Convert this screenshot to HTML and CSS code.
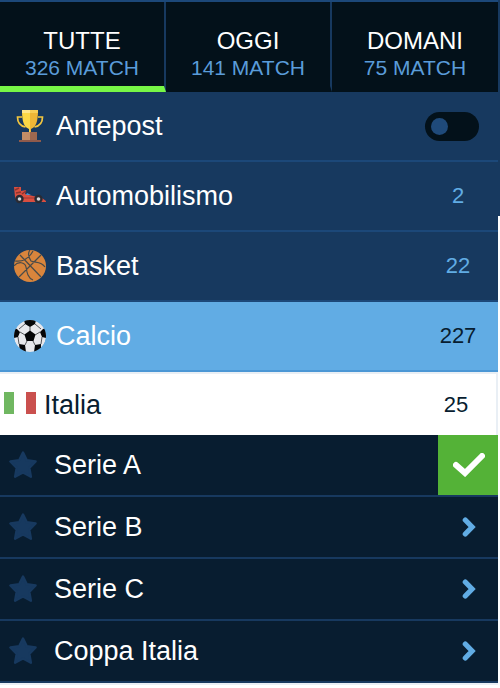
FILE: index.html
```html
<!DOCTYPE html>
<html lang="it">
<head>
<meta charset="utf-8">
<meta name="viewport" content="width=device-width, initial-scale=1">
<title>Palinsesto</title>
<link rel="stylesheet" href="styles.css">
</head>
<body>
<svg class="sprite" aria-hidden="true">
  <symbol id="star" viewBox="0 0 30 28"><path d="M15 1.500l3.800 7.800 8.800 1.200-6.300 6.300 1.600 8.900-7.900-4.200-7.900 4.200 1.600-8.900-6.300-6.300 8.800-1.200z" fill="#17395f" stroke="#17395f" stroke-width="2.400" stroke-linejoin="round"/></symbol>
  <symbol id="chevron" viewBox="0 0 14 20"><path d="M3.300 3l6.800 7-6.800 7" fill="none" stroke="#61ace4" stroke-width="5.200" stroke-linecap="round" stroke-linejoin="miter"/></symbol>
</svg>
<main class="schedule">
  <nav class="tabs">
    <button class="tab tab-active" type="button"><span class="tab-name">TUTTE</span><span class="tab-total">326 MATCH</span></button>
    <button class="tab" type="button"><span class="tab-name">OGGI</span><span class="tab-total">141 MATCH</span></button>
    <button class="tab" type="button"><span class="tab-name">DOMANI</span><span class="tab-total">75 MATCH</span></button>
  </nav>
  <div class="sport">
    <svg class="sport-icon" viewBox="0 0 32 32" aria-hidden="true">
      <path d="M8 7H3.500c0 6 2.500 9 8 10M24 7h4.500c0 6-2.500 9-8 10" fill="none" stroke="#f3c63f" stroke-width="1.700"/>
      <path d="M8 0h8v22h-1v-3C10 17 8 12 8 0z" fill="#fbd846"/><path d="M24 0h-8v22h1v-3c5-2 7-7 7-19z" fill="#efb636"/>
      <path d="M8 0h8v3H8z" fill="#fde68b"/><path d="M16 0h8v3h-8z" fill="#f7cd55"/>
      <path d="M8 22h8v8H8z" fill="#c38d66"/><path d="M16 22h7v8h-7z" fill="#9d6850"/><path d="M5 30h22v2H5z" fill="#8f5a4b"/>
    </svg>
    <label class="sport-name" for="antepost">Antepost</label>
    <input class="switch" id="antepost" type="checkbox" role="switch">
  </div>
  <a class="sport" href="#automobilismo">
    <svg class="sport-icon" viewBox="0 0 32 32" aria-hidden="true">
      <path d="M0 7h7v4l5-1-1 4 8 2 9 2 4 3v1H3L1 17z" fill="#d94e40"/>
      <path d="M1 10l4-2M2 13l5-1M8 14l4-3" stroke="#8d352f" stroke-width="1.500"/>
      <path d="M12 15l1-2 4 2z" fill="#4893d0"/><path d="M9 18h12" stroke="#9d3933" stroke-width="1"/>
      <circle cx="5.500" cy="19" r="4.200" fill="#292b34"/><circle cx="5.500" cy="19" r="1.800" fill="#d3d8df"/>
      <circle cx="24.500" cy="19" r="4.200" fill="#292b34"/><circle cx="24.500" cy="19" r="1.800" fill="#d3d8df"/>
    </svg>
    <span class="sport-name">Automobilismo</span><span class="count">2</span>
  </a>
  <a class="sport" href="#basket">
    <svg class="sport-icon" viewBox="0 0 32 32" aria-hidden="true">
      <circle cx="16" cy="16" r="16" fill="#d9853c"/>
      <path d="M6 5l21 22M27 5L5 27M16 0c-3 4-1 8 1 11 4 2 10 0 14 6M0 16c4-5 11-4 12 1 1 6 2 11 7 13M1 11c7 1 13-1 18-10" fill="none" stroke="#494b49" stroke-width="1.200"/>
    </svg>
    <span class="sport-name">Basket</span><span class="count">22</span>
  </a>
  <a class="sport sport-open" href="#calcio">
    <svg class="sport-icon" viewBox="0 0 32 32" aria-hidden="true">
      <defs><clipPath id="ball"><circle cx="16" cy="16" r="16"/></clipPath></defs>
      <g clip-path="url(#ball)"><circle cx="16" cy="16" r="16" fill="#e7e8ec"/>
      <path d="M16 10.500l5.500 4-2 6.500h-7l-2-6.500zM10 0h12l-1 4-5 3-5-3zM32 8v10l-4-1-2-5 3-3zM0 8v10l4-1 2-5-3-3zM5 24l6 1 1 7H6zM27 24l-6 1-1 7h7z" fill="#050608"/>
      <path d="M16 7v4M21 15l5-3M19 21l2 4M13 21l-2 4M11 15l-5-3M11 4L5 9M21 4l6 5M4 17l1 7M28 17l-1 7" stroke="#55575b" stroke-width="1"/></g>
    </svg>
    <span class="sport-name">Calcio</span><span class="count">227</span>
  </a>
  <a class="country" href="#italia">
    <svg class="flag" viewBox="0 0 32 22" aria-hidden="true"><path d="M0 0h10v22H0z" fill="#70b761"/><path d="M10 0h12v22H10z" fill="#fff"/><path d="M22 0h10v22H22z" fill="#ca504e"/></svg>
    <span class="country-name">Italia</span><span class="count">25</span>
  </a>
  <div class="league">
    <button class="favourite" type="button" aria-label="Preferito"><svg><use href="#star"/></svg></button>
    <a class="league-name" href="#serie-a">Serie A</a>
    <button class="league-action selected" type="button" aria-label="Selezionato"><svg class="check" viewBox="0 0 32 24"><path d="M3 12l9 8L29 3" fill="none" stroke="#fff" stroke-width="6" stroke-linecap="round"/></svg></button>
  </div>
  <div class="league">
    <button class="favourite" type="button" aria-label="Preferito"><svg><use href="#star"/></svg></button>
    <a class="league-name" href="#serie-b">Serie B</a>
    <button class="league-action" type="button" aria-label="Apri"><svg class="chevron"><use href="#chevron"/></svg></button>
  </div>
  <div class="league">
    <button class="favourite" type="button" aria-label="Preferito"><svg><use href="#star"/></svg></button>
    <a class="league-name" href="#serie-c">Serie C</a>
    <button class="league-action" type="button" aria-label="Apri"><svg class="chevron"><use href="#chevron"/></svg></button>
  </div>
  <div class="league">
    <button class="favourite" type="button" aria-label="Preferito"><svg><use href="#star"/></svg></button>
    <a class="league-name" href="#coppa-italia">Coppa Italia</a>
    <button class="league-action" type="button" aria-label="Apri"><svg class="chevron"><use href="#chevron"/></svg></button>
  </div>
</main>
<div class="edge"></div>
</body>
</html>
```
FILE: styles.css
```css
* { box-sizing: border-box; }
body {
  display: flex;
  align-items: flex-start;
  margin: 0;
  background: #fff;
  color: #fff;
  font-family: "Liberation Sans", Arial, sans-serif;
  font-size: 27px;
  line-height: 32px;
}
a { color: inherit; text-decoration: none; }
button {
  margin: 0;
  padding: 0;
  border: 0;
  background: none;
  color: inherit;
  font: inherit;
  cursor: pointer;
}
svg { display: block; flex: none; }
.sprite { position: absolute; width: 0; height: 0; }
.schedule { flex: 1; min-width: 0; border-bottom: 2px solid #e9eff5; }
.edge { width: 2px; height: 216px; background: #17395f; }

.tabs {
  display: grid;
  grid-template-columns: repeat(3, 1fr);
  border-top: 2px solid #1c4879;
  background: #03111a;
}
.tab {
  display: flex;
  flex-direction: column;
  align-items: center;
  padding: 25px 0 5px;
  border-right: 2px solid #17395f;
  border-bottom: 6px solid #03111a;
}
.tab:last-child { border-right: 0; }
.tab-active { border-bottom-color: #77f746; }
.tab-name { font-size: 24px; line-height: 28px; }
.tab-total { color: #5a9cd9; font-size: 21px; line-height: 26px; }

.sport {
  display: flex;
  align-items: center;
  min-height: 70px;
  padding-left: 14px;
  border-bottom: 2px solid #1c4879;
  background: #17395f;
}
.sport-open { border-bottom-color: #4b97d5; background: #61ace4; }
.sport-icon { width: 32px; height: 32px; }
.sport-name { flex: 1; margin-left: 10px; }
.count {
  width: 80px;
  color: #61ace4;
  font-size: 22px;
  text-align: center;
}
.sport-open .count, .country .count { color: #081d30; }

.switch {
  display: flex;
  align-items: center;
  width: 54px;
  height: 29px;
  margin: 0 19px 0 0;
  padding: 0 6px;
  border-radius: 15px;
  background: #03111a;
  appearance: none;
  cursor: pointer;
}
.switch::before {
  width: 17px;
  height: 17px;
  border-radius: 50%;
  background: #1f4a7a;
  content: "";
}
.switch:checked { justify-content: flex-end; }

.country {
  display: flex;
  align-items: center;
  min-height: 63px;
  padding-left: 4px;
  border-top: 2px solid #e9eff5;
  border-right: 2px solid #e9eff5;
  background: #fff;
  color: #081d30;
}
.flag { width: 32px; height: 22px; margin-bottom: 4px; }
.country-name { flex: 1; margin-left: 8px; }

.league {
  display: flex;
  min-height: 62px;
  border-bottom: 2px solid #17395f;
  background: #081d30;
}
.favourite { width: 46px; padding-left: 8px; }
.favourite svg { width: 30px; height: 28px; }
.league-name { flex: 1; align-self: center; padding-left: 8px; }
.league-action {
  display: flex;
  align-items: center;
  justify-content: center;
  width: 60px;
  padding-left: 2px;
}
.selected { background: #54b237; }
.check { width: 32px; height: 24px; }
.chevron { width: 14px; height: 20px; }
```
